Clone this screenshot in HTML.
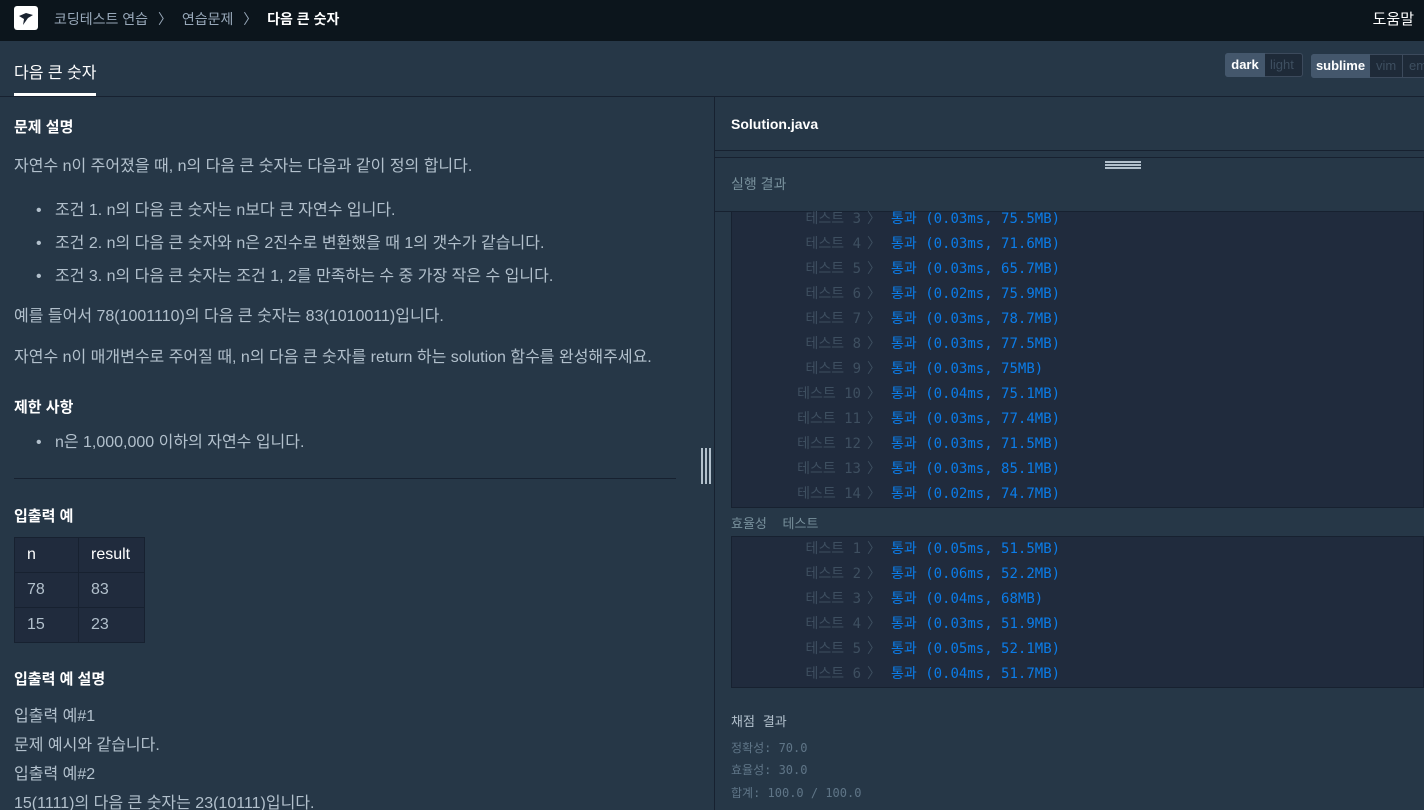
<!DOCTYPE html>
<html><head><meta charset="utf-8"><style>
*{margin:0;padding:0;box-sizing:border-box}
html,body{width:1424px;height:810px;overflow:hidden}
body{background:#263747;font-family:"Liberation Sans","Noto Sans CJK KR",sans-serif;color:#b2c0cc;position:relative}
.a{position:absolute;white-space:nowrap}
.nav{left:0;top:0;width:1424px;height:41px;background:#0c151c}
.t{font-size:16px;color:#b2c0cc}
h4{position:absolute;font-size:15px;color:#fff;font-weight:bold;white-space:nowrap}
.mono{font-family:"DejaVu Sans Mono","Noto Sans CJK KR",monospace;font-size:14px}
.row{position:absolute;left:731px;width:600px;height:25px;font-family:"DejaVu Sans Mono","Noto Sans CJK KR",monospace;font-size:14px;line-height:25px;white-space:nowrap}
.row .l{position:absolute;left:0;width:130px;color:#3e4f60;text-align:right}
.row .g{position:absolute;left:136px;color:#3e4f60}
.row .p{position:absolute;left:160px;color:#0b7ce8}
table{border-collapse:collapse;position:absolute;left:14px;top:537px;font-size:16px}
td{border:1px solid #172130;background:#202b3d;height:35px;padding:0 12px;color:#b2c0cc}
</style></head><body>
<div class="a nav"></div>
<div class="a" style="left:14px;top:6px;width:24px;height:24px;background:#fff;border-radius:3px"><svg width="24" height="24" viewBox="0 0 24 24"><path d="M5 10 L12 7 L19 9 L14 12 L9 19 L10 13 Z" fill="#1a2330"/></svg></div>
<div class="a" style="left:54px;top:9px;font-size:14px;color:#98a8b9">코딩테스트 연습 <span style="margin:0 6px">〉</span> 연습문제 <span style="margin:0 6px">〉</span> <b style="color:#fff">다음 큰 숫자</b></div>
<div class="a" style="right:10px;top:8px;font-size:15px;color:#fff">도움말</div>
<div class="a" style="left:14px;top:59px;font-size:16px;color:#fff">다음 큰 숫자</div>
<div class="a" style="left:14px;top:93px;width:82px;height:3px;background:#fff"></div>
<div class="a" style="left:0;top:96px;width:1424px;height:1px;background:#172130"></div>
<div class="a" style="left:1225px;top:53px;width:78px;height:24px;border:1px solid #3c4a5c;border-radius:3px;background:#1e2a38"></div>
<div class="a" style="left:1225px;top:53px;width:40px;height:24px;background:#44576c;border-radius:3px 0 0 3px;color:#fff;font-size:13px;font-weight:bold;text-align:center;line-height:24px">dark</div>
<div class="a" style="left:1270px;top:53px;font-size:13px;line-height:24px;color:#3e4f60">light</div>
<div class="a" style="left:1311px;top:54px;width:120px;height:24px;border:1px solid #3c4a5c;border-radius:3px;background:#1e2a38"></div>
<div class="a" style="left:1311px;top:54px;width:59px;height:24px;background:#44576c;border-radius:3px 0 0 3px;color:#fff;font-size:13px;font-weight:bold;text-align:center;line-height:24px">sublime</div>
<div class="a" style="left:1376px;top:54px;font-size:13px;line-height:24px;color:#3e4f60">vim</div>
<div class="a" style="left:1402px;top:54px;width:1px;height:24px;background:#3c4a5c"></div>
<div class="a" style="left:1409px;top:54px;font-size:13px;line-height:24px;color:#3e4f60">em</div>

<h4 style="left:14px;top:116px">문제 설명</h4>
<div class="a t" style="left:14px;top:152px">자연수 n이 주어졌을 때, n의 다음 큰 숫자는 다음과 같이 정의 합니다.</div>
<div class="a t" style="left:36px;top:196px">•&nbsp;&nbsp; 조건 1. n의 다음 큰 숫자는 n보다 큰 자연수 입니다.</div>
<div class="a t" style="left:36px;top:229px">•&nbsp;&nbsp; 조건 2. n의 다음 큰 숫자와 n은 2진수로 변환했을 때 1의 갯수가 같습니다.</div>
<div class="a t" style="left:36px;top:262px">•&nbsp;&nbsp; 조건 3. n의 다음 큰 숫자는 조건 1, 2를 만족하는 수 중 가장 작은 수 입니다.</div>
<div class="a t" style="left:14px;top:302px">예를 들어서 78(1001110)의 다음 큰 숫자는 83(1010011)입니다.</div>
<div class="a t" style="left:14px;top:343px">자연수 n이 매개변수로 주어질 때, n의 다음 큰 숫자를 return 하는 solution 함수를 완성해주세요.</div>
<h4 style="left:14px;top:396px">제한 사항</h4>
<div class="a t" style="left:36px;top:428px">•&nbsp;&nbsp; n은 1,000,000 이하의 자연수 입니다.</div>
<div class="a" style="left:14px;top:478px;width:662px;height:1px;background:#172130"></div>
<h4 style="left:14px;top:505px">입출력 예</h4>
<table><tr><td style="width:64px;color:#fff">n</td><td style="width:66px;color:#fff">result</td></tr><tr><td>78</td><td>83</td></tr><tr><td>15</td><td>23</td></tr></table>
<h4 style="left:14px;top:668px">입출력 예 설명</h4>
<div class="a t" style="left:14px;top:702px">입출력 예#1</div>
<div class="a t" style="left:14px;top:731px">문제 예시와 같습니다.</div>
<div class="a t" style="left:14px;top:760px">입출력 예#2</div>
<div class="a t" style="left:14px;top:789px">15(1111)의 다음 큰 숫자는 23(10111)입니다.</div>

<div class="a" style="left:701px;top:448px;width:10px;height:36px;border-left:2px solid #b2c0cc;border-right:2px solid #b2c0cc"><div style="margin-left:2px;width:2px;height:36px;background:#b2c0cc"></div></div>
<div class="a" style="left:714px;top:97px;width:1px;height:713px;background:#172130"></div>

<div class="a" style="left:731px;top:116px;font-size:14px;font-weight:bold;color:#fff">Solution.java</div>
<div class="a" style="left:715px;top:150px;width:709px;height:1px;background:#172130"></div>
<div class="a" style="left:715px;top:157px;width:709px;height:1px;background:#172130"></div>
<div class="a" style="left:1105px;top:161px;width:36px;height:1.5px;background:#b2c0cc;box-shadow:0 3px 0 #b2c0cc,0 6px 0 #b2c0cc"></div>
<div class="a" style="left:731px;top:174px;font-size:14px;color:#78909c">실행 결과</div>
<div class="a" style="left:715px;top:211px;width:709px;height:1px;background:#172130"></div>
<div class="a" style="left:731px;top:212px;width:693px;height:296px;background:#202b3d;border:1px solid #172130;border-top:0"></div>
<div class="a" style="left:731px;top:536px;width:693px;height:152px;background:#202b3d;border:1px solid #172130"></div>
<div class="a mono" style="left:731px;top:513px;font-size:13px;color:#78909c">효율성&nbsp; 테스트</div>

<div class="row" style="top:207px"><span class="l">테스트 3</span><span class="g">〉</span><span class="p">통과 (0.03ms, 75.5MB)</span></div>
<div class="row" style="top:232px"><span class="l">테스트 4</span><span class="g">〉</span><span class="p">통과 (0.03ms, 71.6MB)</span></div>
<div class="row" style="top:257px"><span class="l">테스트 5</span><span class="g">〉</span><span class="p">통과 (0.03ms, 65.7MB)</span></div>
<div class="row" style="top:282px"><span class="l">테스트 6</span><span class="g">〉</span><span class="p">통과 (0.02ms, 75.9MB)</span></div>
<div class="row" style="top:307px"><span class="l">테스트 7</span><span class="g">〉</span><span class="p">통과 (0.03ms, 78.7MB)</span></div>
<div class="row" style="top:332px"><span class="l">테스트 8</span><span class="g">〉</span><span class="p">통과 (0.03ms, 77.5MB)</span></div>
<div class="row" style="top:357px"><span class="l">테스트 9</span><span class="g">〉</span><span class="p">통과 (0.03ms, 75MB)</span></div>
<div class="row" style="top:382px"><span class="l">테스트 10</span><span class="g">〉</span><span class="p">통과 (0.04ms, 75.1MB)</span></div>
<div class="row" style="top:407px"><span class="l">테스트 11</span><span class="g">〉</span><span class="p">통과 (0.03ms, 77.4MB)</span></div>
<div class="row" style="top:432px"><span class="l">테스트 12</span><span class="g">〉</span><span class="p">통과 (0.03ms, 71.5MB)</span></div>
<div class="row" style="top:457px"><span class="l">테스트 13</span><span class="g">〉</span><span class="p">통과 (0.03ms, 85.1MB)</span></div>
<div class="row" style="top:482px"><span class="l">테스트 14</span><span class="g">〉</span><span class="p">통과 (0.02ms, 74.7MB)</span></div>

<div class="row" style="top:537px"><span class="l">테스트 1</span><span class="g">〉</span><span class="p">통과 (0.05ms, 51.5MB)</span></div>
<div class="row" style="top:562px"><span class="l">테스트 2</span><span class="g">〉</span><span class="p">통과 (0.06ms, 52.2MB)</span></div>
<div class="row" style="top:587px"><span class="l">테스트 3</span><span class="g">〉</span><span class="p">통과 (0.04ms, 68MB)</span></div>
<div class="row" style="top:612px"><span class="l">테스트 4</span><span class="g">〉</span><span class="p">통과 (0.03ms, 51.9MB)</span></div>
<div class="row" style="top:637px"><span class="l">테스트 5</span><span class="g">〉</span><span class="p">통과 (0.05ms, 52.1MB)</span></div>
<div class="row" style="top:662px"><span class="l">테스트 6</span><span class="g">〉</span><span class="p">통과 (0.04ms, 51.7MB)</span></div>

<div class="a mono" style="left:731px;top:711px;font-size:13px;color:#b2c0cc">채점 결과</div>
<div class="a mono" style="left:731px;top:739px;font-size:12px;color:#5f7587">정확성: 70.0</div>
<div class="a mono" style="left:731px;top:761px;font-size:12px;color:#5f7587">효율성: 30.0</div>
<div class="a mono" style="left:731px;top:784px;font-size:12px;color:#5f7587">합계: 100.0 / 100.0</div>
</body></html>
